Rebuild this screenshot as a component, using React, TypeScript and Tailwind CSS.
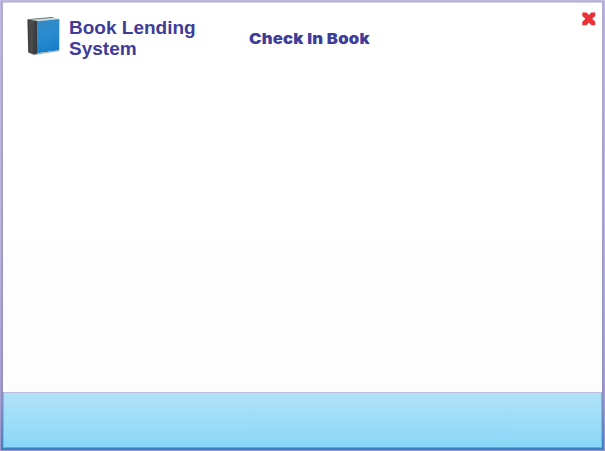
function BookIcon() {
  return (
    <svg viewBox="0 0 36 42" className="h-[42px] w-9 shrink-0" aria-hidden="true">
      <defs>
        <linearGradient id="cover" x1="0" y1="0" x2="0.25" y2="1">
          <stop offset="0" stopColor="#3487bd" />
          <stop offset="0.5" stopColor="#2a8cd0" />
          <stop offset="1" stopColor="#1780c9" />
        </linearGradient>
        <linearGradient id="spine" x1="0" y1="0" x2="1" y2="0">
          <stop offset="0" stopColor="#3a3c3e" />
          <stop offset="0.4" stopColor="#4b4d4f" />
          <stop offset="0.7" stopColor="#3c3e40" />
          <stop offset="1" stopColor="#38393b" />
        </linearGradient>
      </defs>
      <path d="M2.6 5.4L28 3L34.3 5L12 7.5Z" fill="#cfd9dc" />
      <path d="M2.4 5.3L27 3L28.4 3.7L4 6Z" fill="#5e6d74" />
      <path d="M2.4 5.6L12.6 7L12.8 40L9 40.8L3.2 38.6Z" fill="url(#spine)" />
      <path d="M12.5 7.2L34.4 5.1L34.2 36.2L12.8 39.2Z" fill="url(#cover)" />
      <path d="M9 40.8L12.8 39.2L34.2 36.1L34 37.2L12.8 40.4Z" fill="#a9b3b8" />
    </svg>
  );
}

function CloseIcon() {
  return (
    <svg viewBox="0 0 14 14" className="size-3.5" aria-hidden="true">
      <path
        d="M0.3 0.4H4.6L6.9 2.9L9.3 0.4H13.2V4L10.2 6.8L13.2 9.7V13.2H9.4L6.9 10.6L4.4 13.2H0.3V9.7L3.4 6.8L0.3 4Z"
        fill="#eb3134"
      />
    </svg>
  );
}

export default function App() {
  return (
    <div className="h-[451px] w-[605px] bg-linear-to-b from-[#bfbbdf] from-50% to-[#9c96ca] p-px font-['Liberation_Sans',Arial,sans-serif] text-[#403d98]">
      <div className="flex h-full flex-col bg-linear-to-b from-[#b1add6] via-[#9592c7] via-86% to-[#3583c4] px-[2px] pt-px pb-[2px]">
        <main className="flex min-h-0 grow flex-col border-t border-[#d4d2e9] bg-linear-to-b from-white from-62% to-[#fdfdfd] to-63%">
          <header className="flex items-start pt-[11px] pr-[6px] pl-[22px]">
            <BookIcon />
            <h1 className="mt-[3px] ml-2 w-[180px] text-[19px] leading-[21px] font-bold">
              Book Lending
              <br />
              System
            </h1>
            <h2 className="mt-[15px] origin-left scale-x-[1.11] font-[Inter,sans-serif] text-[15px] leading-5 font-black tracking-[0.2px] whitespace-nowrap">
              Check In Book
            </h2>
            <button type="button" aria-label="Close" className="-mt-[2px] ml-auto">
              <CloseIcon />
            </button>
          </header>
        </main>
        <footer className="h-14 shrink-0 border-x border-t border-b border-x-[#7fb9e3] border-t-[#bdbfe0] border-b-[#5aabdb] bg-linear-to-b from-[#b0e2f8] to-[#8ad7f7]" />
      </div>
    </div>
  );
}
